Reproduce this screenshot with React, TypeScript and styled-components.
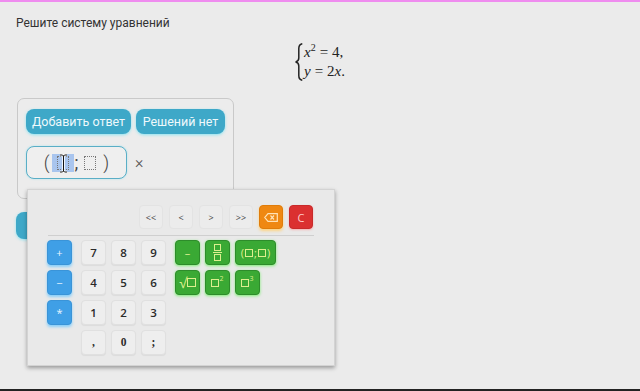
import React from 'react';
import styled, { createGlobalStyle } from 'styled-components';

const GlobalStyle = createGlobalStyle`
  html, body { margin: 0; padding: 0; background: #ebebeb; }
  body { font-family: Roboto, "Noto Sans", sans-serif; }
  * { box-sizing: border-box; }
`;

const Page = styled.div`
  position: relative;
  width: 640px;
  height: 391px;
  background: #ebebeb;
  border-top: 2px solid #ef8cef;
  border-bottom: 2px solid #222;
  overflow: hidden;
`;

const Title = styled.div`
  margin: 13px 0 0 16px;
  font-size: 12px;
  line-height: 16px;
  color: #333;
`;

const EquationRow = styled.div`
  display: flex;
  justify-content: center;
  margin-top: 12px;
  height: 38px;
`;

const Equation = styled.div`
  display: flex;
  align-items: stretch;
  gap: 1px;
  color: #222;
`;

const EqLines = styled.div`
  display: flex;
  flex-direction: column;
  font-family: "Liberation Serif", "DejaVu Serif", serif;
  font-size: 15px;
`;

const EqLine = styled.div`
  height: 19px;
  line-height: 19px;
  white-space: nowrap;
`;

const Var = styled.i`
  font-style: italic;
`;

const Sup = styled.sup`
  font-size: 10px;
  vertical-align: 6px;
  line-height: 0;
`;

const Rel = styled.span`
  margin: 0 4px;
`;

const AnswerPanel = styled.div`
  margin: 17px 0 0 17px;
  width: 217px;
  height: 101px;
  border: 1px solid #c9c9c9;
  border-radius: 7px;
  padding: 10px 8px;
  background: #ececec;
`;

const ButtonRow = styled.div`
  display: flex;
  gap: 5px;
`;

const TealButton = styled.div<{ $w?: number }>`
  height: 25px;
  width: ${p => (p.$w ? `${p.$w}px` : 'auto')};
  padding: 0 7px;
  border-radius: 8px;
  background: #3ea8c8;
  color: #eef9fc;
  font-size: 12.5px;
  display: flex;
  align-items: center;
  justify-content: center;
  box-shadow: 0 1px 3px rgba(100, 225, 245, 0.7);
  white-space: nowrap;
`;

const InputRow = styled.div`
  margin-top: 12px;
  display: flex;
  align-items: center;
  gap: 8px;
`;

const InputBox = styled.div`
  width: 101px;
  height: 33px;
  border: 1px solid #5aaec6;
  border-radius: 8px;
  background: #efefef;
  display: flex;
  align-items: center;
  justify-content: center;
  font-size: 18px;
  color: #444;
  box-shadow: 0 0 2px rgba(120, 220, 240, 0.6);
`;

const Paren = styled.span`
  font-weight: 300;
  margin: 0 2px;
`;

const Slot = styled.span<{ $sel?: boolean }>`
  position: relative;
  display: inline-flex;
  align-items: center;
  justify-content: center;
  padding: 2px 5px;
  background: ${p => (p.$sel ? '#a9c5ee' : 'transparent')};
`;

const SlotBox = styled.span`
  display: inline-block;
  width: 12px;
  height: 14px;
  border: 1px dotted #777;
`;

const Cursor = styled.svg`
  position: absolute;
  left: 7px;
  top: 0;
`;

const Semi = styled.span`
  margin: 0 1px;
`;

const Remove = styled.span`
  font-size: 16px;
  font-weight: 300;
  color: #555;
`;

const CheckButton = styled(TealButton)`
  margin: 13px 0 0 16px;
  height: 27px;
  width: 96px;
`;

const Keyboard = styled.div`
  position: absolute;
  left: 27px;
  top: 187px;
  width: 308px;
  height: 177px;
  background: #e9e9e9;
  border: 1px solid #d3d3d3;
  box-shadow: 0 2px 4px rgba(0, 0, 0, 0.35);
  padding: 15px 20px 0 19px;
  display: flex;
  flex-direction: column;
`;

const TopRow = styled.div`
  display: flex;
  justify-content: flex-end;
  gap: 6px;
  padding-right: 1px;
`;

const Separator = styled.div`
  margin: 6px 0 4px 1px;
  height: 1px;
  background: #cfcfcf;
`;

const KeysArea = styled.div`
  display: flex;
  gap: 9px;
`;

const Column = styled.div`
  display: flex;
  flex-direction: column;
  gap: 5px;
`;

const DigitGrid = styled.div`
  display: grid;
  grid-template-columns: repeat(3, 25px);
  grid-auto-rows: 25px;
  gap: 5px;
`;

const GreenGrid = styled.div`
  display: grid;
  grid-template-columns: 25px 25px 41px;
  grid-auto-rows: 25px;
  gap: 5px;
  align-content: start;
`;

type Kind = 'nav' | 'digit' | 'blue' | 'green' | 'orange' | 'red';

const palette: Record<Kind, { bg: string; fg: string; border: string; glow: string }> = {
  nav: { bg: '#ececec', fg: '#444', border: '#e3e3e3', glow: 'none' },
  digit: { bg: '#eeeeee', fg: '#2a2a2a', border: '#e0e0e0', glow: '0 1px 1px rgba(0,0,0,0.06)' },
  blue: { bg: '#3f9fe6', fg: '#eaf5ff', border: '#3a94d8', glow: '0 2px 3px rgba(110, 200, 255, 0.8)' },
  green: { bg: '#3aa934', fg: '#dcef8e', border: '#2e8c2b', glow: '0 1px 3px rgba(110, 240, 100, 0.9)' },
  orange: { bg: '#ef8812', fg: '#ffe2b6', border: '#e07c0a', glow: '0 2px 3px rgba(255, 210, 120, 0.9)' },
  red: { bg: '#db3030', fg: '#ffcaca', border: '#c82a2a', glow: '0 1px 2px rgba(255, 140, 140, 0.6)' },
};

const Key = styled.div<{ $kind: Kind; $w?: number; $serif?: boolean }>`
  width: ${p => p.$w ?? 25}px;
  height: ${p => (p.$kind === 'nav' || p.$kind === 'orange' || p.$kind === 'red' ? 24 : 25)}px;
  background: ${p => palette[p.$kind].bg};
  color: ${p => palette[p.$kind].fg};
  border: 1px solid ${p => palette[p.$kind].border};
  box-shadow: ${p => palette[p.$kind].glow};
  border-radius: 4px;
  display: flex;
  align-items: center;
  justify-content: center;
  font-family: ${p => (p.$serif ? '"Liberation Serif", serif' : '"Open Sans", "DejaVu Sans", sans-serif')};
  font-size: ${p => (p.$kind === 'nav' ? 9 : p.$kind === 'digit' ? 11.5 : 11)}px;
  font-weight: ${p => (p.$kind === 'digit' ? 600 : 400)};
  line-height: 1;
`;

const Sq = styled.span<{ $s?: number }>`
  display: inline-block;
  width: ${p => p.$s ?? 8}px;
  height: ${p => p.$s ?? 8}px;
  border: 1px solid currentColor;
`;

const Frac = styled.span`
  display: flex;
  flex-direction: column;
  align-items: center;
  gap: 1px;
`;

const FracBar = styled.span`
  width: 9px;
  height: 1px;
  background: currentColor;
`;

const Power = styled.span`
  display: inline-flex;
  align-items: flex-start;
`;

const SmallSup = styled.span`
  font-size: 7px;
  margin-top: -4px;
`;

const PairText = styled.span`
  display: inline-flex;
  align-items: center;
  gap: 1px;
  font-size: 11px;
`;

const Sqrt = styled.span`
  display: inline-flex;
  align-items: center;
  font-size: 14px;
`;

const SqrtBox = styled.span`
  display: inline-block;
  width: 9px;
  height: 9px;
  border: 1px solid currentColor;
`;

const Brace = () => (
  <svg width="8" height="38" viewBox="0 0 8 38">
    <path
      d="M7.3 0.7 C4.3 1.2 3.8 2.8 3.8 5.5 L3.8 15 C3.8 17.4 2.8 18.5 0.6 19 C2.8 19.5 3.8 20.6 3.8 23 L3.8 32.5 C3.8 35.2 4.3 36.8 7.3 37.3"
      fill="none"
      stroke="#222"
      strokeWidth="1.5"
    />
  </svg>
);

const Backspace = () => (
  <svg width="14" height="9" viewBox="0 0 14 9">
    <path d="M4 0.7 H13.3 V8.3 H4 L0.7 4.5 Z" fill="none" stroke="currentColor" strokeWidth="1.2" />
    <path d="M6.5 2.5 L10 6.5 M10 2.5 L6.5 6.5" stroke="currentColor" strokeWidth="1.2" />
  </svg>
);

const IBeam = () => (
  <Cursor width="9" height="19" viewBox="0 0 9 19">
    <path
      d="M1 1 H3.5 L4.5 2 L5.5 1 H8 M4.5 2 V17 M1 18 H3.5 L4.5 17 L5.5 18 H8"
      fill="none"
      stroke="#fff"
      strokeWidth="2.6"
    />
    <path
      d="M1 1 H3.5 L4.5 2 L5.5 1 H8 M4.5 2 V17 M1 18 H3.5 L4.5 17 L5.5 18 H8"
      fill="none"
      stroke="#111"
      strokeWidth="1"
    />
  </Cursor>
);

export default function App() {
  return (
    <>
      <GlobalStyle />
      <Page>
        <Title>Решите систему уравнений</Title>
        <EquationRow>
          <Equation>
            <Brace />
            <EqLines>
              <EqLine>
                <Var>x</Var>
                <Sup>2</Sup>
                <Rel>=</Rel>4,
              </EqLine>
              <EqLine>
                <Var>y</Var>
                <Rel>=</Rel>2<Var>x</Var>.
              </EqLine>
            </EqLines>
          </Equation>
        </EquationRow>

        <AnswerPanel>
          <ButtonRow>
            <TealButton $w={105}>Добавить ответ</TealButton>
            <TealButton $w={89}>Решений нет</TealButton>
          </ButtonRow>
          <InputRow>
            <InputBox>
              <Paren>(</Paren>
              <Slot $sel>
                <SlotBox />
                <IBeam />
              </Slot>
              <Semi>;</Semi>
              <Slot>
                <SlotBox />
              </Slot>
              <Paren>)</Paren>
            </InputBox>
            <Remove>×</Remove>
          </InputRow>
        </AnswerPanel>

        <CheckButton>Проверить</CheckButton>

        <Keyboard>
          <TopRow>
            <Key $kind="nav" $w={24}>&lt;&lt;</Key>
            <Key $kind="nav" $w={24}>&lt;</Key>
            <Key $kind="nav" $w={24}>&gt;</Key>
            <Key $kind="nav" $w={24}>&gt;&gt;</Key>
            <Key $kind="orange" $w={24}>
              <Backspace />
            </Key>
            <Key $kind="red" $w={24}>C</Key>
          </TopRow>
          <Separator />
          <KeysArea>
            <Column>
              <Key $kind="blue">+</Key>
              <Key $kind="blue">−</Key>
              <Key $kind="blue">*</Key>
            </Column>
            <DigitGrid>
              {['7', '8', '9', '4', '5', '6', '1', '2', '3'].map(d => (
                <Key key={d} $kind="digit">{d}</Key>
              ))}
              <Key $kind="digit" $serif>,</Key>
              <Key $kind="digit" $serif>0</Key>
              <Key $kind="digit" $serif>;</Key>
            </DigitGrid>
            <GreenGrid>
              <Key $kind="green">–</Key>
              <Key $kind="green">
                <Frac>
                  <Sq $s={7} />
                  <FracBar />
                  <Sq $s={7} />
                </Frac>
              </Key>
              <Key $kind="green" $w={41}>
                <PairText>
                  (<Sq $s={8} />; <Sq $s={8} />)
                </PairText>
              </Key>
              <Key $kind="green">
                <Sqrt>
                  √<SqrtBox />
                </Sqrt>
              </Key>
              <Key $kind="green">
                <Power>
                  <Sq $s={8} />
                  <SmallSup>2</SmallSup>
                </Power>
              </Key>
              <Key $kind="green">
                <Power>
                  <Sq $s={8} />
                  <SmallSup>3</SmallSup>
                </Power>
              </Key>
            </GreenGrid>
          </KeysArea>
        </Keyboard>
      </Page>
    </>
  );
}
